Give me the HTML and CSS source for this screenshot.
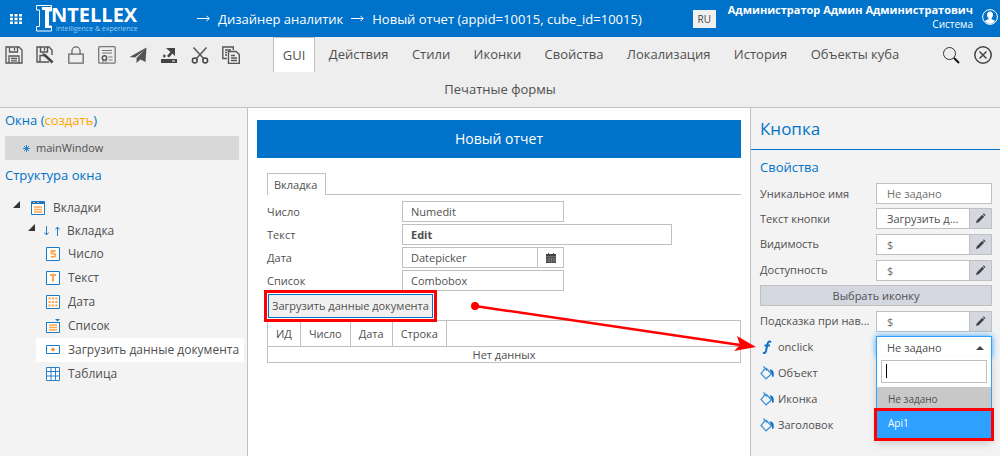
FILE: index.html
```html
<!DOCTYPE html>
<html lang="ru">
<head>
<meta charset="utf-8">
<title>Дизайнер аналитик</title>
<link rel="stylesheet" href="styles.css">
</head>
<body>
<svg class="defs" aria-hidden="true">
  <symbol id="pencil" viewBox="0 0 12 12"><path d="M1 11l1-3 6-6 2 2-6 6zM8.600 1.400l1-1 2 2-1 1z" fill="#444"/></symbol>
  <symbol id="bucket" viewBox="0 0 15 14"><path d="M5.500 2L1 7.500 6 12.800 11.500 8 6 2M3.500.500l3.500 4" fill="#f3f3f3" stroke="#3a8fd4" stroke-width="1.200"/><path d="M9.500 3.500c3.300 0 4.300 1.500 4.300 5 0 1.700-.4 2.500-1 2.500s-.8-.8-.8-2.800z" fill="#1070c4"/></symbol>
</svg>
<header class="header">
  <button class="apps" aria-label="Приложения">
    <svg width="12" height="10" viewBox="0 0 12 10" fill="#fff"><path d="M0 0h3v2.500H0zM4.500 0h3v2.500h-3zM9 0h3v2.500H9zM0 3.700h3v2.500H0zM4.500 3.700h3v2.500h-3zM9 3.700h3v2.500H9zM0 7.500h3V10H0zM4.500 7.500h3V10h-3zM9 7.500h3V10H9z"/></svg>
  </button>
  <a class="logo" href="#">
    <svg width="17" height="27" viewBox="0 0 17 27"><path d="M.5.500h15v5.500h-3v15h3v5H.5v-4.500h3V5h-3z" fill="none" stroke="#fff"/><path d="M6 2h10v4h-3v15h3v2H9V5H6z" fill="#fff"/></svg>
    <span class="logo-words"><b class="logo-name">NTELLEX</b><span class="logo-tag">intelligence &amp; experience</span></span>
  </a>
  <nav class="crumbs">
    <svg width="13" height="7" viewBox="0 0 13 7"><path d="M0 3.500h12M9.500.800L12.200 3.500 9.500 6.200" fill="none" stroke="#fff"/></svg>
    <a href="#">Дизайнер аналитик</a>
    <svg width="13" height="7" viewBox="0 0 13 7"><path d="M0 3.500h12M9.500.800L12.200 3.500 9.500 6.200" fill="none" stroke="#fff"/></svg>
    <a href="#">Новый отчет (appid=10015, cube_id=10015)</a>
  </nav>
  <button class="lang">RU</button>
  <div class="user"><b>Администратор Админ Администратович</b><span>Система</span></div>
  <svg class="avatar" width="16" height="16" viewBox="0 0 16 16"><circle cx="8" cy="8" r="7.400" fill="none" stroke="#fff"/><path d="M8 2.500c2 0 3 1.300 3 3.200 0 1.500-.7 2.600-1.400 3.200v1.300l3.600 1.500A7 7 0 0 1 8 15a7 7 0 0 1-5.200-3.300l3.600-1.500V8.900C5.700 8.300 5 7.200 5 5.700c0-1.900 1-3.200 3-3.200z" fill="#fff"/></svg>
</header>

<div class="toolbar">
  <div class="tools">
    <button aria-label="Сохранить"><svg viewBox="0 0 18 18"><path d="M1 1h13l3 3v13H1zM4.500 1v5h8V1M9.500 2v2.500M4 17v-7h10v7M6 12.500h6M6 14.800h6" fill="none" stroke="#555" stroke-width="1.300"/></svg></button>
    <button aria-label="Сохранить как"><svg viewBox="0 0 18 18"><path d="M16 9V4l-3-3H1v15h12M4.500 1v5h7V1M8.500 2v2.500M4 16V9.500h4" fill="none" stroke="#555" stroke-width="1.400"/><path d="M6 7l3.500 1 8 7.500-1.800 2L8 10.200z" fill="#444"/></svg></button>
    <button aria-label="Заблокировать"><svg viewBox="0 0 18 20"><path d="M1 9h16v10H1zM4.500 9V5.500a4.500 4.500 0 0 1 9 0V9" fill="none" stroke="#666" stroke-width="1.400"/></svg></button>
    <button aria-label="Сертификат"><svg viewBox="0 0 18 18"><rect x=".7" y=".7" width="16.500" height="16.500" rx="1" fill="none" stroke="#777" stroke-width="1.300"/><path d="M4 4.500h10M4 7h10M10.500 11h4M10.500 14h4" stroke="#777"/><circle cx="6.500" cy="12" r="2.200" fill="none" stroke="#555" stroke-width="1.500"/><path d="M5 14v3M8 14v3" stroke="#777"/></svg></button>
    <button aria-label="Отправить"><svg viewBox="0 0 18 18"><path d="M17.500 1.500L16.500 16l-5-2.500L7.500 17v-5L15 4.500l-9 7L.5 11z" fill="#555"/></svg></button>
    <button aria-label="Экспорт"><svg viewBox="0 0 18 18"><path d="M6 2h9v8l-2.500-2.500L9 11.500 7 10l3.500-4zM1 13h16v4H1zM4 8l2 2-2 2-1-2z" fill="#444"/><path d="M12 15h3" stroke="#fff"/></svg></button>
    <button aria-label="Вырезать"><svg viewBox="0 0 18 18"><path d="M2.500 1.500L13 13M15.500 1.500L5 13" stroke="#555" stroke-width="1.500"/><circle cx="3.800" cy="14.500" r="2.400" fill="none" stroke="#444" stroke-width="1.500"/><circle cx="14.200" cy="14.500" r="2.400" fill="none" stroke="#444" stroke-width="1.500"/></svg></button>
    <button aria-label="Копировать"><svg viewBox="0 0 18 18"><path d="M5 12.500H.8V1h10.500v3M3 4h6M3 6.500h2M3 9h2" fill="none" stroke="#555" stroke-width="1.400"/><path d="M6.500 5.500H14l3.300 3v9H6.500zM9 9.500h4M9 12h6M9 14.500h6" fill="#eee" stroke="#555" stroke-width="1.400"/></svg></button>
  </div>
  <div class="tools-right">
    <button aria-label="Поиск"><svg viewBox="0 0 18 18"><circle cx="7.500" cy="7.500" r="6" fill="none" stroke="#333"/><path d="M12 12l5 5" stroke="#111" stroke-width="2"/></svg></button>
    <button aria-label="Закрыть"><svg viewBox="0 0 18 18"><circle cx="9" cy="9" r="8.200" fill="none" stroke="#444" stroke-width="1.500"/><path d="M5.500 5.500l7 7M12.500 5.500l-7 7" stroke="#444" stroke-width="1.500"/></svg></button>
  </div>
  <nav class="tabs">
    <a class="tab active" href="#">GUI</a>
    <a class="tab" href="#">Действия</a>
    <a class="tab" href="#">Стили</a>
    <a class="tab" href="#">Иконки</a>
    <a class="tab" href="#">Свойства</a>
    <a class="tab" href="#">Локализация</a>
    <a class="tab" href="#">История</a>
    <a class="tab" href="#">Объекты куба</a>
    <a class="tab" href="#">Печатные формы</a>
  </nav>
</div>

<main class="workspace">
  <aside class="left">
    <h2>Окна (<a href="#">создать</a>)</h2>
    <a class="window" href="#"><svg width="7" height="7" viewBox="0 0 7 7"><path d="M3.500 0v7M0 3.500h7M1 1l5 5M6 1L1 6" stroke="#2a80c8"/></svg>mainWindow</a>
    <h2>Структура окна</h2>
    <ul class="tree">
      <li class="node"><svg class="caret" viewBox="0 0 7 7"><path d="M7 0v7H0z"/></svg><svg class="ico" viewBox="0 0 14 14"><path d="M.5.500h13v13H.5z" fill="#fff" stroke="#1a78c8"/><path d="M1 2h12" stroke="#1a78c8" stroke-width="2"/><path d="M2 1.500h2M6 1.500h2" stroke="#ffa54f"/><path d="M3 6h8M3 8.500h8M3 11h8" stroke="#ffa54f" stroke-width="1.400"/></svg>Вкладки</li>
      <li class="node nested"><svg class="caret" viewBox="0 0 7 7"><path d="M7 0v7H0z"/></svg><svg class="ico move" viewBox="0 0 16 10"><path d="M2.500 0v9M.5 6.500l2 2.500 2-2.500M13.500 10V1M11.500 3.500l2-2.500 2 2.500" fill="none" stroke="#2a80c8"/></svg>Вкладка</li>
      <li class="leaf"><svg class="ico" viewBox="0 0 14 14"><path d="M.5.500h13v13H.5z" fill="#fff" stroke="#1a78c8"/><path d="M9.500 4h-4v2.600h2c2.600 0 2.600 3.200 0 3.200H4.800" fill="none" stroke="#ffa54f" stroke-width="1.800"/></svg>Число</li>
      <li class="leaf"><svg class="ico" viewBox="0 0 14 14"><path d="M.5.500h13v13H.5z" fill="#fff" stroke="#1a78c8"/><path d="M4 4h6M7 4v6.500" stroke="#ffa54f" stroke-width="2"/></svg>Текст</li>
      <li class="leaf"><svg class="ico" viewBox="0 0 14 14"><path d="M.5.500h13v13H.5z" fill="#fff" stroke="#1a78c8"/><path d="M2.500 3.500h9M2.500 7h9M2.500 10.500h9" stroke="#ffa54f" stroke-width="2.200" stroke-dasharray="2.200 1.200"/></svg>Дата</li>
      <li class="leaf"><svg class="ico" viewBox="0 0 14 14"><path d="M.5 3.500h13v10H.5z" fill="#fff" stroke="#1a78c8"/><path d="M0 3.500h14" stroke="#1a78c8"/><path d="M9 0h5l-2.500 2.500z" fill="#1a78c8"/><path d="M3 6h8M3 8.500h8M3 11h8" stroke="#ffa54f" stroke-width="1.300"/></svg>Список</li>
      <li class="leaf selected"><svg class="ico" viewBox="0 0 14 14"><path d="M.5 2.500h13v8H.5z" fill="#fff" stroke="#1a78c8"/><circle cx="7" cy="6.500" r="1.800" fill="#ff9030"/></svg>Загрузить данные документа</li>
      <li class="leaf"><svg class="ico" viewBox="0 0 14 14"><path d="M.5.500h13v13H.5zM5 0v14M9.500 0v14M0 4.500h14M0 9h14" fill="#fff" stroke="#2a80c8"/></svg>Таблица</li>
    </ul>
  </aside>

  <section class="canvas">
    <h1>Новый отчет</h1>
    <div class="form">
      <div class="form-tabs"><button class="form-tab">Вкладка</button></div>
      <div class="row"><label for="num">Число</label><input id="num" value="Numedit"></div>
      <div class="row"><label for="txt">Текст</label><input id="txt" class="wide" value="Edit"></div>
      <div class="row"><label for="date">Дата</label><span class="date"><input id="date" value="Datepicker"><button aria-label="Календарь"><svg width="10" height="10" viewBox="0 0 10 10"><path d="M0 1h10v9H0z" fill="#444"/><path d="M0 3.500h10M0 6h10M0 8h10M3 4v6M5.500 4v6M8 4v6" stroke="#999" stroke-width=".5"/><path d="M2.500 0v2M7.500 0v2" stroke="#444"/></svg></button></span></div>
      <div class="row"><label for="list">Список</label><input id="list" value="Combobox"></div>
      <button class="load marked">Загрузить данные документа</button>
      <table>
        <thead><tr><th>ИД</th><th>Число</th><th>Дата</th><th>Строка</th><th class="rest"></th></tr></thead>
        <tbody><tr><td colspan="5">Нет данных</td></tr></tbody>
      </table>
    </div>
  </section>

  <aside class="right">
    <h2 class="title">Кнопка</h2>
    <h3>Свойства</h3>
    <div class="props">
      <div class="prop"><label for="p1">Уникальное имя</label><input id="p1" placeholder="Не задано"></div>
      <div class="prop"><label for="p2">Текст кнопки</label><span class="edit"><input id="p2" value="Загрузить д..."><button aria-label="Изменить текст"><svg><use href="#pencil"/></svg></button></span></div>
      <div class="prop expr"><label for="p3">Видимость</label><span class="edit"><input id="p3" placeholder="$"><button aria-label="Изменить видимость"><svg><use href="#pencil"/></svg></button></span></div>
      <div class="prop expr"><label for="p4">Доступность</label><span class="edit"><input id="p4" placeholder="$"><button aria-label="Изменить доступность"><svg><use href="#pencil"/></svg></button></span></div>
      <button class="pick">Выбрать иконку</button>
      <div class="prop expr"><label for="p5">Подсказка при нав...</label><span class="edit"><input id="p5" placeholder="$"><button aria-label="Изменить подсказку"><svg><use href="#pencil"/></svg></button></span></div>
      <div class="prop expr">
        <label for="p6"><svg class="mark" viewBox="0 0 15 14"><path d="M11 2.200C9.500.700 8 1.500 7.500 4L6 11c-.4 2-1.800 2.500-3 1.500M4.500 5.500h5.500" fill="none" stroke="#1070c4" stroke-width="2"/></svg>onclick</label>
        <div class="combo">
          <button id="p6" class="combo-value" aria-expanded="true">Не задано<svg width="8" height="4" viewBox="0 0 8 4"><path d="M0 4l4-4 4 4z" fill="#444"/></svg></button>
          <div class="menu">
            <div class="menu-search"><input aria-label="Поиск"><i class="cursor"></i></div>
            <ul role="listbox"><li role="option" class="current">Не задано</li><li role="option" class="hover marked">Api1</li></ul>
          </div>
        </div>
      </div>
      <div class="prop expr"><span class="label"><svg class="mark"><use href="#bucket"/></svg>Объект</span></div>
      <div class="prop expr"><span class="label"><svg class="mark"><use href="#bucket"/></svg>Иконка</span></div>
      <div class="prop expr"><span class="label"><svg class="mark"><use href="#bucket"/></svg>Заголовок</span></div>
    </div>
  </aside>
  <svg class="pointer" width="286" height="54" viewBox="0 0 286 54"><circle cx="4" cy="7" r="4" fill="red"/><path d="M4 7L276 47" stroke="red" stroke-width="2.500"/><path d="M266 37l19 11-22 4 6-6z" fill="red"/></svg>
</main>
</body>
</html>
```
FILE: styles.css
```css
* { box-sizing: border-box; }
body { margin: 0; min-height: 100vh; display: flex; flex-direction: column; font: 11px/16px "Open Sans", sans-serif; color: #505050; background: #f3f3f3; }
button, input { font: inherit; color: inherit; margin: 0; border-radius: 0; }
button { padding: 0; border: 0; background: none; }
a { color: inherit; text-decoration: none; }
h1, h2, h3, ul { margin: 0; padding: 0; font-weight: 400; list-style: none; }
svg { display: block; flex: none; }
.defs { position: absolute; width: 0; height: 0; }

.header { display: flex; align-items: center; height: 37px; padding: 0 2px 0 10px; background: #0072c9; color: #fff; }
.logo { display: flex; align-items: center; margin-left: 14px; width: 161px; }
.logo-words { display: flex; flex-direction: column; margin-left: -2px; }
.logo-name { font-size: 20px; line-height: 20px; }
.logo-tag { font-size: 7px; line-height: 8px; padding-left: 5px; color: #9ccbf0; white-space: nowrap; }
.crumbs { flex: 1; display: flex; align-items: center; gap: 8px; font-size: 13px; line-height: 20px; white-space: nowrap; }
.lang { width: 23px; height: 18px; background: #f0f0f0; color: #444; font-size: 10px; }
.user { display: flex; flex-direction: column; align-items: flex-end; margin: 0 9px 0 12px; padding-bottom: 4px; font-size: 10px; line-height: 14px; white-space: nowrap; }
.user b { font-size: 11px; }
.avatar { margin-bottom: 3px; }

.toolbar { background: #eee; border-bottom: 1px solid #c0c0c0; }
.tools { float: left; display: flex; align-items: center; gap: 13px; height: 35px; padding-left: 5px; }
.tools svg, .tools-right svg { width: 18px; height: 18px; }
.tools-right { float: right; display: flex; align-items: center; gap: 14px; height: 35px; padding-right: 8px; }
.tabs { text-align: center; font-size: 13px; line-height: 35px; }
.tab { display: inline-block; padding: 0 9px; border: 1px solid transparent; border-width: 0 1px; vertical-align: top; }
.tab.active { background: #fff; border: 1px solid #c0c0c0; border-bottom: 0; line-height: 34px; }

.workspace { position: relative; flex: 1; display: grid; grid-template-columns: 248px minmax(0, 1fr) 250px; }
.left { border-right: 1px solid #c0c0c0; padding: 2px 3px 0 5px; }
.left h2 { font-size: 13px; line-height: 20px; color: #0072c9; }
.left h2 a { color: #ffa500; }
.window { display: flex; align-items: center; gap: 6px; height: 24px; margin: 6px 5px 5px 0; padding-left: 18px; background: #d8d8d8; }
.tree { padding-top: 11px; font-size: 12px; white-space: nowrap; }
.tree li { display: flex; align-items: center; gap: 8px; height: 24px; }
.tree .node { height: 23px; padding-left: 8px; }
.tree .nested { padding-left: 23px; }
.tree .leaf { margin-left: 31px; padding-left: 10px; }
.tree .selected { background: #fff; }
.caret { width: 7px; height: 7px; margin: 0 3px 6px 0; fill: #333; }
.ico { width: 14px; height: 14px; }
.ico.move { width: 16px; height: 10px; margin-left: -1px; }
.tree .nested { gap: 7px; }

.canvas { background: #fff; padding: 12px 9px 0; }
h1 { background: #0072c9; color: #fff; font-size: 14px; line-height: 38px; text-align: center; }
.form { padding: 15px 0 0 10px; }
.form-tabs { display: flex; border-bottom: 1px solid #c0c0c0; margin-bottom: 6px; }
.form-tab { height: 22px; padding: 0 8px 0 6px; margin-bottom: -1px; background: #fff; border: 1px solid #c0c0c0; border-bottom: 0; }
.row { display: flex; align-items: center; margin-bottom: 2px; }
.row label { width: 135px; }
.row input { width: 162px; height: 21px; padding: 0 8px; border: 1px solid #c0c0c0; background: #fff; }
.row .wide { width: 270px; font-weight: 700; }
.date { display: flex; width: 162px; border: 1px solid #c0c0c0; }
.date input { flex: 1; min-width: 0; height: 19px; border: 0; border-right: 1px solid #c0c0c0; }
.date button { width: 25px; display: grid; place-items: center; }
.load { display: block; height: 24px; margin: 3px 0 2px 1px; padding: 0 3px; background: #f0f0f0; border: 1px solid #0072c9; }
.load.marked { position: relative; outline-offset: 1px; }
.marked { outline: 3px solid #f00; }
table { width: 100%; border-collapse: collapse; }
th, td { border: 1px solid #c0c0c0; font-weight: 400; text-align: center; padding: 0 8px; height: 16px; line-height: 15px; }
th { height: 26px; line-height: 24px; }
th.rest { width: 100%; }

.right { border-left: 1px solid #c0c0c0; }
.title { padding: 0 9px; font-size: 17px; line-height: 41px; color: #0072c9; border-bottom: 1px solid #0072c9; }
h3 { padding: 6px 9px 5px; font-size: 13px; line-height: 22px; color: #0072c9; }
.props { display: flex; flex-direction: column; gap: 4px; padding: 0 8px 0 9px; }
.prop { display: grid; grid-template-columns: 116px minmax(0, 1fr); align-items: center; height: 21px; }
.prop.expr { height: 22px; }
.prop label, .label { display: flex; align-items: center; gap: 3px; white-space: nowrap; }
.mark { width: 15px; height: 14px; }
.prop input { width: 100%; height: 21px; padding: 0 10px; border: 1px solid #c0c0c0; background: #fff; }
.prop input::placeholder { color: #707070; }
.edit { display: flex; }
.edit input { flex: 1; min-width: 0; padding-right: 4px; }
.edit button { width: 22px; display: grid; place-items: center; background: #d4d7e0; border: 1px solid #c0c0c0; border-left: 0; }
.edit svg { width: 11px; height: 11px; }
.pick { height: 21px; background: #d4d7e0; border: 1px solid #c0c0c0; }
.combo { position: relative; align-self: start; z-index: 1; box-shadow: 0 0 6px #2ea0ff; }
.combo-value { display: flex; align-items: center; justify-content: space-between; width: 100%; height: 22px; padding: 0 7px 0 10px; background: #fff; border: 1px solid #2ea0ff; border-bottom: 0; }
.menu { position: absolute; top: 21px; left: 0; right: 0; background: #fff; border: 1px solid #2ea0ff; border-top: 0; box-shadow: 0 5px 8px rgba(0, 0, 0, .15); font-size: 10px; }
.menu-search { position: relative; padding: 3px 4px 4px; }
.menu-search input { height: 23px; }
.cursor { position: absolute; left: 9px; top: 7px; width: 1px; height: 14px; background: #000; }
.menu li { height: 24px; padding: 0 11px; line-height: 24px; }
.menu .current { background: #c8c8c8; }
.menu .hover { height: 27px; background: #2ea0ff; color: #fff; position: relative; }
.pointer { position: absolute; right: 243px; top: 191px; z-index: 2; }
```
